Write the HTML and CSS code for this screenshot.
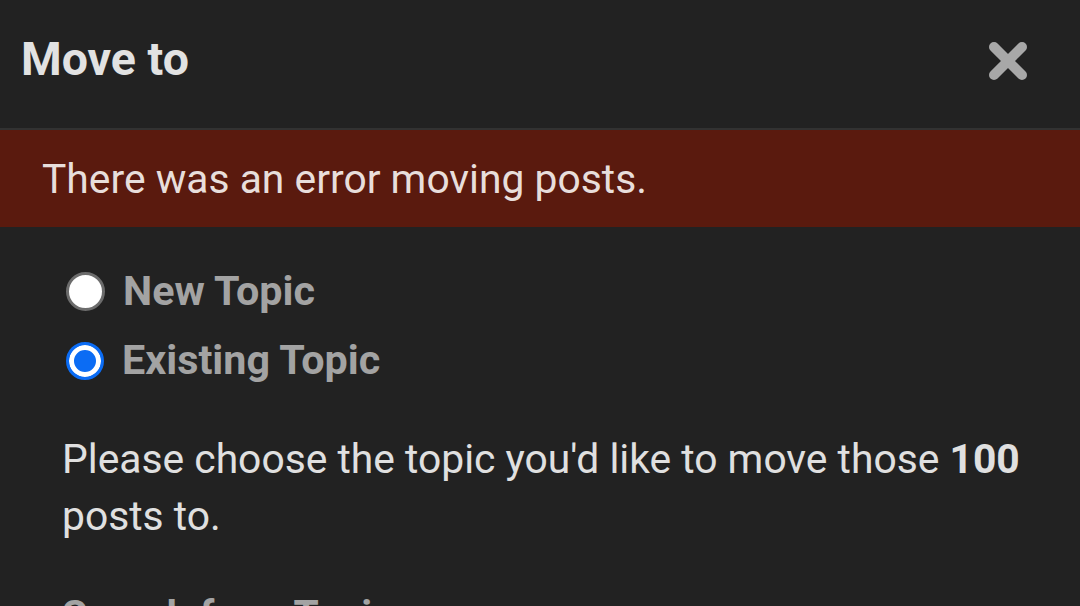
FILE: index.html
```html
<!DOCTYPE html>
<html lang="en">
<head>
<meta charset="utf-8">
<title>Move to</title>
<link rel="stylesheet" href="styles.css">
</head>
<body>
<div class="modal">
  <header class="modal-header">
    <h1 class="modal-title">Move to</h1>
    <button class="close-btn" aria-label="Close">
      <svg width="38" height="38" viewBox="0 0 38 38" aria-hidden="true">
        <line x1="5" y1="5" x2="33" y2="33" />
        <line x1="33" y1="5" x2="5" y2="33" />
      </svg>
    </button>
  </header>
  <div class="alert-error">There was an error moving posts.</div>
  <div class="modal-body">
    <div class="radios">
      <label class="radio-row">
        <span class="radio"></span>
        <span class="radio-label">New Topic</span>
      </label>
      <label class="radio-row">
        <span class="radio radio-checked"></span>
        <span class="radio-label">Existing Topic</span>
      </label>
    </div>
    <p class="instructions">Please choose the topic you'd like to move those <b>100</b> posts to.</p>
    <h2 class="search-label">Search for a Topic</h2>
  </div>
</div>
</body>
</html>
```
FILE: styles.css
```css
html, body {
  margin: 0;
  padding: 0;
  background: #222222;
  overflow: hidden;
}
body {
  font-family: Roboto, "Liberation Sans", sans-serif;
  width: 1080px;
  height: 606px;
}
.modal {
  display: flex;
  flex-direction: column;
}
.modal-header {
  height: 118px;
  padding: 0 53px 10px 21px;
  display: flex;
  align-items: center;
  justify-content: space-between;
  border-bottom: 2px solid #323232;
}
.modal-title {
  margin: 0;
  font-size: 46.5px;
  font-weight: 700;
  color: #e2e2e2;
  line-height: 54px;
}
.close-btn {
  border: 0;
  padding: 0;
  margin: 3px 0 0 0;
  background: none;
  width: 38px;
  height: 38px;
  display: flex;
}
.close-btn svg line {
  stroke: #a8a8a8;
  stroke-width: 10;
  stroke-linecap: round;
}
.alert-error {
  height: 97px;
  background: #5a1a0e;
  color: #e8dedb;
  font-size: 40.8px;
  display: flex;
  align-items: center;
  padding-left: 42px;
}
.modal-body {
  padding: 30px 30px 0 62px;
}
.radios {
  display: flex;
  flex-direction: column;
}
.radio-row {
  height: 69px;
  display: flex;
  align-items: center;
  gap: 18px;
  padding-left: 4px;
}
.radio {
  box-sizing: border-box;
  width: 39px;
  height: 39px;
  border-radius: 50%;
  background: #ffffff;
  border: 3px solid #6c6c6c;
  flex: none;
}
.radio-checked {
  width: 38px;
  height: 38px;
  background: #0b6cf4;
  border: 3px solid #0b6cf4;
  box-shadow: inset 0 0 0 5px #ffffff;
}
.radio-label {
  font-size: 41.3px;
  font-weight: 700;
  color: #a3a3a3;
  line-height: 57px;
}
.instructions {
  margin: 36px 0 0 0;
  font-size: 40.8px;
  line-height: 57px;
  color: #e0e0e0;
}
.instructions b {
  font-weight: 700;
}
.search-label {
  margin: 42px 0 0 0;
  font-size: 40.8px;
  line-height: 57px;
  font-weight: 700;
  color: #a3a3a3;
}
```
